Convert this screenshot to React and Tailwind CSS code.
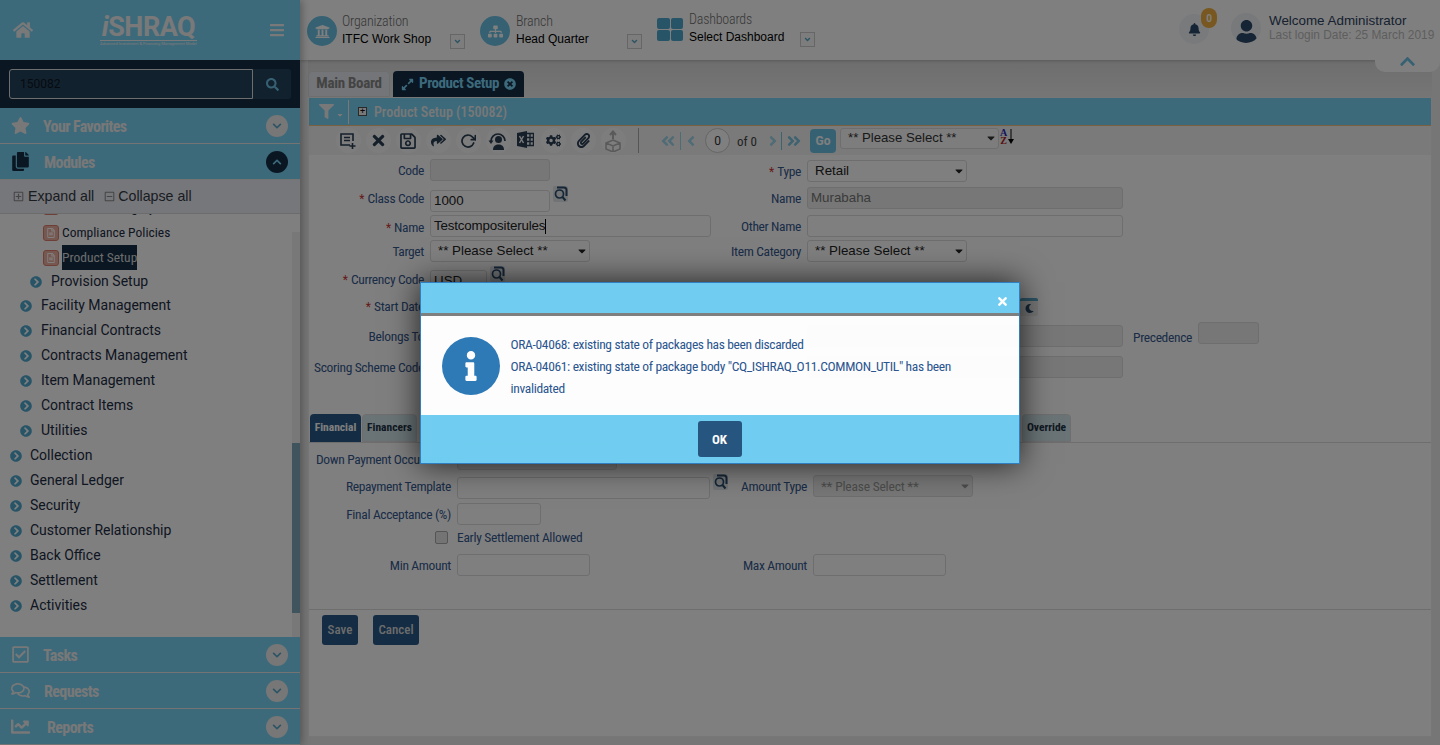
import React from 'react';
import {
  FaHome, FaBars, FaSearch, FaStar, FaChevronDown, FaChevronUp, FaUniversity, FaSitemap, FaBell, FaUser,
  FaFilter, FaCaretDown, FaTimes, FaRegSave, FaReplyAll, FaCogs, FaPaperclip,
  FaRegCheckSquare, FaRegComments, FaChartLine, FaCopy, FaAngleDoubleLeft, FaAngleDoubleRight, FaAngleLeft,
  FaAngleRight, FaExpandAlt, FaTimesCircle, FaChevronCircleRight, FaInfo, FaRegFileAlt, FaMoon,
  FaRegPlusSquare, FaRegMinusSquare, FaAngleDown,
} from 'react-icons/fa';
import { FiRotateCw } from 'react-icons/fi';

const Cn = ({ children, className = '' }) => (
  <span className={`whitespace-nowrap font-['Roboto',sans-serif] [font-stretch:75%] ${className}`}>{children}</span>
);

function SideHead({ icon: Icon, title, open, textPad = 'ml-[13px]' }) {
  return (
    <div className="h-[36px] shrink-0 bg-[#7ad4f6] border-b border-[#e8e8e8] flex items-center pl-[11px] pr-[12px]">
      <Icon size={19} className={open ? 'text-[#142e46]' : 'text-[#f0f0f0]'} />
      <Cn className={`${textPad} mt-[3px] text-[16px] tracking-[-0.6px] font-bold text-[#f0f0f0]`}>{title}</Cn>
      <span className={`ml-auto w-[22px] h-[22px] rounded-full flex items-center justify-center ${open ? 'bg-[#142e46] text-[#7ad4f6]' : 'bg-[#eeeeee] text-[#5aa9c9]'}`}>
        {open ? <FaChevronUp size={10} /> : <FaChevronDown size={10} />}
      </span>
    </div>
  );
}

function TreeRow({ label, pad }) {
  return (
    <div className={`h-[25px] flex items-center gap-[8px] ${pad}`}>
      <FaChevronCircleRight size={12} className="text-[#4fa9cf]" />
      <span className="text-[14px] text-[#1d2c44]">{label}</span>
    </div>
  );
}

function DocIcon() {
  return (
    <span className="w-[16px] h-[16px] rounded-[3px] bg-[#efb0a0] border-[1.5px] border-[#dd7f6c] flex items-center justify-center text-white"><FaRegFileAlt size={10} /></span>
  );
}

function Sidebar() {
  const level1 = ['Facility Management', 'Financial Contracts', 'Contracts Management', 'Item Management', 'Contract Items', 'Utilities'];
  const level0 = ['Collection', 'General Ledger', 'Security', 'Customer Relationship', 'Back Office', 'Settlement', 'Activities'];
  return (
    <aside className="w-[300px] shrink-0 h-full flex flex-col relative z-10 shadow-[2px_0_8px_rgba(0,0,0,0.3)] bg-white">
      <div className="h-[60px] shrink-0 bg-[#7ad4f6] flex items-center pl-[13px] pr-[15px] text-[#f2f2f2]">
        <FaHome size={20} />
        <div className="ml-[67px] flex flex-col items-center leading-none">
          <span className="text-[27px] font-bold tracking-[-0.5px] leading-[26px]"><i>i</i>SHRAQ</span>
          <span className="text-[4px] leading-[5px] border-t border-[#f2f2f2] w-[97px] text-center whitespace-nowrap overflow-hidden">Advanced Investment &amp; Financing Management Model</span>
        </div>
        <FaBars size={16} className="ml-auto" />
      </div>
      <div className="h-[48px] shrink-0 bg-[#142e46] flex items-center pl-[9px] pr-[9px]">
        <div className="h-[30px] flex-1 border border-[#dddddd] rounded-l-[3px] bg-[#24425c] pl-[10px] flex items-center text-[12px] text-[#0c1722]">150082</div>
        <div className="h-[30px] w-[38px] rounded-r-[3px] bg-[#24425c] flex items-center justify-center text-[#6cc3e6]"><FaSearch size={13} /></div>
      </div>
      <SideHead icon={FaStar} title="Your Favorites" />
      <SideHead icon={FaCopy} title="Modules" open textPad="ml-[14px]" />
      <div className="h-[34px] shrink-0 bg-[#eceef6] border-b border-[#d8d8d8] flex items-center pl-[13px] text-[14.2px] text-[#333a44] font-['Liberation_Sans',sans-serif]">
        <FaRegPlusSquare size={11} className="text-[#8a8a8a] mr-[4px]" />Expand all
        <FaRegMinusSquare size={11} className="text-[#8a8a8a] ml-[10px] mr-[3px]" />Collapse all
      </div>
      <div className="flex-1 relative overflow-hidden">
        <div className="-mt-[20px] pr-[8px]">
          <div className="h-[26px] flex items-center pl-[43px] gap-[3px]">
            <DocIcon />
            <Cn className="text-[13.5px] text-[#1d2c44]">Product Category</Cn>
          </div>
          <div className="h-[25px] flex items-center pl-[43px] gap-[3px]">
            <DocIcon />
            <Cn className="text-[13.5px] text-[#1d2c44]">Compliance Policies</Cn>
          </div>
          <div className="h-[25px] flex items-center pl-[43px] gap-[3px]">
            <DocIcon />
            <Cn className="text-[13.5px] text-[#d8d8d8] bg-[#142e46] h-[25px] leading-[25px]">Product Setup</Cn>
          </div>
          <div className="h-[23px] flex items-center gap-[9px] pl-[30px]">
            <FaChevronCircleRight size={12} className="text-[#4fa9cf]" />
            <span className="text-[14px] text-[#1d2c44]">Provision Setup</span>
          </div>
          {level1.map((l) => <TreeRow key={l} label={l} pad="pl-[20px] [&>span]:ml-[1px]" />)}
          {level0.map((l) => <TreeRow key={l} label={l} pad="pl-[10px]" />)}
        </div>
        <div className="absolute right-0 top-[18px] bottom-0 w-[8px] bg-[#f1f1f1]">
          <div className="mt-[211px] h-[170px] bg-[#7fa9bb]" />
        </div>
      </div>
      <SideHead icon={FaRegCheckSquare} title="Tasks" />
      <SideHead icon={FaRegComments} title="Requests" textPad="ml-[14px]" />
      <SideHead icon={FaChartLine} title="Reports" textPad="ml-[17px]" />
    </aside>
  );
}

function MiniSelect() {
  return (
    <span className="w-[15px] h-[15px] border border-[#cccccc] bg-[#fafafa] flex items-center justify-center text-[#5aa9c9]">
      <FaAngleDown size={9} />
    </span>
  );
}

function TopItem({ icon, label, value, boxLeft }) {
  return (
    <div className="flex items-center">
      {icon}
      <div className={boxLeft}>
        <div className="-mt-[2px]"><Cn className="text-[14px] tracking-[-0.2px] font-light text-[#6f6f6f] leading-[18px] block">{label}</Cn></div>
        <div className="text-[12px] leading-[18px] text-black font-['Liberation_Sans',sans-serif] whitespace-nowrap">{value}</div>
      </div>
      <div className="self-end mb-[-1px]"><MiniSelect /></div>
    </div>
  );
}

function TopBar() {
  const circle = 'w-[30px] h-[30px] rounded-full bg-[#6cc3e6] flex items-center justify-center text-white';
  return (
    <header className="h-[60px] shrink-0 bg-white shadow-[0_1px_3px_rgba(0,0,0,0.2)] flex items-start pt-[14px] pl-[7px] pr-[6px] relative">
      <TopItem boxLeft="ml-[5px] w-[108px]" label="Organization" value="ITFC Work Shop" icon={<span className={circle}><FaUniversity size={15} /></span>} />
      <div className="w-[15px]" />
      <TopItem boxLeft="ml-[6px] w-[111px]" label="Branch" value="Head Quarter" icon={<span className={circle}><FaSitemap size={15} /></span>} />
      <div className="w-[15px]" />
      <div className="-mt-[2px]">
        <TopItem boxLeft="ml-[6px] w-[111px]" label="Dashboards" value="Select Dashboard" icon={
          <span className="grid grid-cols-2 gap-[1px] w-[26px]">
            <i className="h-[11px] rounded-[2px] bg-[#4fa9cf]" /><i className="h-[11px] rounded-[2px] bg-[#4fa9cf]" />
            <i className="h-[11px] rounded-[2px] bg-[#4fa9cf]" /><i className="h-[11px] rounded-[2px] bg-[#4fa9cf]" />
          </span>
        } />
      </div>
      <div className="ml-auto flex items-start">
        <div className="relative w-[30px] h-[30px] rounded-full bg-[#f0f4f8] flex items-center justify-center text-[#2c4a6b]">
          <FaBell size={13} />
          <span className="absolute -top-[6px] left-[22px] w-[16px] h-[20px] rounded-[8px] bg-[#f0b040] text-white text-[10px] font-bold flex items-center justify-center">0</span>
        </div>
        <div className="ml-[22px] -mt-[1px] w-[30px] h-[30px] rounded-full bg-[#eef2f6] overflow-hidden flex items-end justify-center text-[#2c4a6b]">
          <FaUser size={23} />
        </div>
        <div className="ml-[8px] w-[165px] -mt-[1px] font-['Liberation_Sans',sans-serif] whitespace-nowrap">
          <div className="text-[13.4px] leading-[15px] text-[#2e4260]">Welcome Administrator</div>
          <div className="text-[11.9px] leading-[14px] text-[#bdbdbd]">Last login Date: 25 March 2019</div>
        </div>
      </div>
      <div className="absolute right-0 top-[60px] w-[65px] h-[12px] rounded-b-[10px] bg-white flex justify-center text-[#6cc3e6] z-10">
        <FaChevronUp size={17} className="-mt-[7px]" />
      </div>
    </header>
  );
}

function ToolBtn({ children, plain }) {
  return (
    <span className={`w-[25px] h-[25px] rounded-full flex items-center justify-center text-[#2a3f55] ${plain ? '' : 'mx-[2.5px] bg-[#fbfbfb]'}`}>{children}</span>
  );
}

function NewDocIcon() {
  return (
    <svg width="18" height="18" viewBox="0 0 18 18" fill="none" stroke="currentColor" strokeWidth="1.6">
      <path d="M11 13H2V2h12v7" />
      <path d="M5 5.5h6M5 8.5h6M13.5 11v6M10.5 14h6" />
    </svg>
  );
}

function SupportIcon() {
  return (
    <svg width="20" height="20" viewBox="0 0 20 20" fill="currentColor">
      <path d="M3 10a7 7 0 1 1 14 0" fill="none" stroke="currentColor" strokeWidth="1.7" />
      <path d="M0.5 9.5h5L3 13z" />
      <circle cx="10.5" cy="8.5" r="3.5" />
      <path d="M5 19c0-4 2.5-5.5 5.5-5.5S16 15 16 19z" />
    </svg>
  );
}

function ExcelIcon() {
  return (
    <svg width="17" height="17" viewBox="0 0 17 17" className="-mt-[3px]">
      <path d="M0 2l10-2v17L0 15z" fill="currentColor" />
      <path d="M2.5 5l4 7M6.5 5l-4 7" stroke="#f4f4f4" strokeWidth="1.5" />
      <path d="M10 2.5h6.5v12H10M10 6.5h6.5M10 10.5h6.5M13 2.5v12" fill="none" stroke="currentColor" strokeWidth="1.4" />
    </svg>
  );
}

function BoxUpIcon() {
  return (
    <svg width="18" height="22" viewBox="0 0 18 22" fill="none" stroke="#b4b4b4" strokeWidth="1.6">
      <path d="M9 10l7 3v6l-7 3-7-3v-6zM2 13l7 3 7-3M9 16v6" />
      <path d="M9 9V2M6 5l3-3.5L12 5" strokeWidth="2" />
    </svg>
  );
}

function SortAz() {
  return (
    <span className="flex -mt-[7px] ml-px items-start">
      <span className="flex flex-col items-center font-['Liberation_Serif',serif] font-bold text-[10px] leading-[8px]">
        <span className="text-[#2a2ab8]">A</span>
        <span className="text-[#b02020]">Z</span>
      </span>
      <svg width="6" height="16" viewBox="0 0 6 16" className="ml-[1px]">
        <path d="M3 0v12" stroke="#000" strokeWidth="1" />
        <path d="M0 10h6l-3 5z" fill="#000" />
      </svg>
    </span>
  );
}

function Toolbar() {
  return (
    <div className="h-[29px] bg-[#f4f4f4] flex items-center pl-[24px] shrink-0 text-[#2a3f55]">
      <ToolBtn><NewDocIcon /></ToolBtn>
      <ToolBtn><FaTimes size={17} /></ToolBtn>
      <ToolBtn><FaRegSave size={18} /></ToolBtn>
      <ToolBtn><FaReplyAll size={15} className="-scale-x-100" /></ToolBtn>
      <ToolBtn><FiRotateCw size={16} strokeWidth={2.6} /></ToolBtn>
      <ToolBtn><SupportIcon /></ToolBtn>
      <ToolBtn plain><ExcelIcon /></ToolBtn>
      <ToolBtn><FaCogs size={15} /></ToolBtn>
      <ToolBtn><FaPaperclip size={15} /></ToolBtn>
      <ToolBtn><BoxUpIcon /></ToolBtn>
      <span className="ml-[10px] w-px h-[25px] bg-[#aaaaaa]" />
      <div className="ml-[21px] flex items-center text-[#9fd6ec]">
        <FaAngleDoubleLeft size={16} />
        <span className="ml-[4px] w-px h-[18px] bg-[#9fd6ec]" />
        <FaAngleLeft size={16} className="ml-[2px]" />
        <span className="ml-[6px] w-[25px] h-[25px] rounded-full border border-[#cccccc] bg-white text-[#333] text-[12px] flex items-center justify-center">0</span>
        <span className="ml-[7px] w-[20px]"><Cn className="text-[13px] text-[#444]">of 0</Cn></span>
        <FaAngleRight size={16} className="ml-[8px]" />
        <span className="w-px h-[18px] bg-[#7fc5e2]" />
        <FaAngleDoubleRight size={16} className="ml-[4px] text-[#7fc5e2]" />
      </div>
      <span className="ml-[8px] w-[26px] h-[24px] rounded-[4px] bg-[#6cc3e6] text-white text-[12px] font-bold flex items-center justify-center">Go</span>
      <span className="ml-[4px] w-[159px] h-[21px] -mt-[5px] rounded-[3px] border border-[#dddddd] bg-[#fafafa] pl-[7px] pr-[1px] flex items-center justify-between text-[13.2px] text-[#333] font-['Liberation_Sans',sans-serif]">
        ** Please Select **<FaCaretDown size={12} />
      </span>
      <SortAz />
    </div>
  );
}

function Lookup({ className = '' }) {
  return (
    <span className={`w-[15px] h-[16px] rounded-[2px] bg-[#e2e6ea] text-[#2a4d6e] ${className}`}>
      <svg width="15" height="16" viewBox="0 0 15 16" fill="none" stroke="currentColor">
        <path d="M4 1.5h7a2.5 2.5 0 0 1 2.5 2.5v6" strokeWidth="2" />
        <circle cx="6.5" cy="8" r="4" strokeWidth="1.7" />
        <path d="M9.5 11l3 3.5" strokeWidth="2" />
      </svg>
    </span>
  );
}

const inputCls = "h-[22px] rounded-[3px] border border-[#dddddd] text-[13.33px] px-[3px] flex items-center text-[#222] bg-white font-['Liberation_Sans',sans-serif]";
const disabledCls = '!bg-[#eceeec]';

function Label({ children, required, width = 'w-[114px]', pt = 'pt-[3px]' }) {
  return (
    <label className={`${width} shrink-0 mr-[6px] text-right leading-[16px] whitespace-nowrap ${pt}`}>
      {required && <span className="text-[#c33] text-[12px] mr-[3px]">*</span>}
      <Cn className="text-[13.5px] tracking-[-0.35px] text-[#36598f]">{children}</Cn>
    </label>
  );
}

function PleaseSelect({ w = 'w-[160px]' }) {
  return (
    <span className={`${inputCls} ${w} justify-between !pl-[7px] !pr-[1px]`}>
      ** Please Select **<FaCaretDown size={12} />
    </span>
  );
}

function TopForm() {
  return (
    <div className="h-[259px] flex shrink-0">
      <div className="w-[422px] pl-[1px] shrink-0">
        <div className="flex mt-[4px]"><Label>Code</Label><span className={`${inputCls} ${disabledCls} w-[120px]`} /></div>
        <div className="flex mt-[9px]">
          <Label required pt="pt-0">Class Code</Label><span className={`${inputCls} w-[120px]`}>1000</span><Lookup className="ml-[3px] -mt-[4px]" />
        </div>
        <div className="flex mt-[3px]"><Label required pt="pt-[4px]">Name</Label><span className={`${inputCls} w-[281px] tracking-[-0.15px]`}>Testcompositerules<i className="w-px h-[15px] bg-black" /></span></div>
        <div className="flex mt-[3px]"><Label>Target</Label><PleaseSelect /></div>
        <div className="flex mt-[8px]"><Label required pt="pt-px">Currency Code</Label><span className={`${inputCls} w-[57px]`}>USD</span><Lookup className="ml-[3px] -mt-[4px]" /></div>
        <div className="flex mt-[3px]"><Label required>Start Date</Label></div>
        <div className="flex mt-[10px]"><Label>Belongs To</Label></div>
        <div className="flex mt-[12px]"><Label>Scoring Scheme Code</Label></div>
      </div>
      <div className="flex-1">
        <div className="flex mt-[5px]"><Label width="w-[70px]" required>Type</Label><span className={`${inputCls} w-[160px] justify-between !pl-[7px] !pr-[1px]`}>Retail<FaCaretDown size={12} /></span></div>
        <div className="flex mt-[5px]"><Label width="w-[70px]">Name</Label><span className={`${inputCls} ${disabledCls} w-[316px] !text-[#777]`}>Murabaha</span></div>
        <div className="flex mt-[6px]"><Label width="w-[70px]">Other Name</Label><span className={`${inputCls} w-[316px]`} /></div>
        <div className="flex mt-[3px]"><Label width="w-[70px]">Item Category</Label><PleaseSelect /></div>
        <div className="h-[18px] mt-[36px] pl-[289px] flex">
          <span className="w-[18px] h-[18px] rounded-[2px] border-t-[3px] border-[#5aa9c9] bg-[#eceeec] flex items-center justify-center text-[#2a4d6e]"><FaMoon size={9} /></span>
        </div>
        <div className="flex mt-[6px] items-start">
          <span className="ml-[76px] w-[316px] h-[22px] mt-[3px] rounded-[3px] border border-[#dddddd] bg-[#eceeec]" />
          <span className="ml-[10px] mt-[7px] mr-[6px] leading-[16px]"><Cn className="text-[13.5px] tracking-[-0.35px] text-[#36598f]">Precedence</Cn></span>
          <span className={`${inputCls} ${disabledCls} w-[61px]`} />
        </div>
        <span className={`${inputCls} ${disabledCls} w-[316px] ml-[76px] mt-[9px]`} />
      </div>
    </div>
  );
}

function Tabs() {
  return (
    <div className="h-[29px] flex items-end pl-px border-b border-[#dddddd] shrink-0">
      <span className="w-[51px] h-[28px] rounded-t-[4px] bg-[#285a88] text-white flex items-center justify-center"><Cn className="text-[11.5px] font-bold">Financial</Cn></span>
      <span className="ml-px w-[55px] h-[28px] rounded-t-[4px] bg-[#d4e8ee] border border-[#dddddd] flex items-center justify-center"><Cn className="text-[11.5px] font-bold text-[#234]">Financers</Cn></span>
      <span className="ml-[605px] w-[49px] h-[28px] rounded-t-[4px] bg-[#d4e8ee] border border-[#dddddd] flex items-center justify-center"><Cn className="text-[11.5px] font-bold text-[#234]">Override</Cn></span>
    </div>
  );
}

function LowerForm() {
  const L = (p) => <Label width="w-[141px]" {...p} />;
  return (
    <div className="pl-px h-[166px] shrink-0">
      <div className="flex mt-[2px]"><L pt="pt-[6px]">Down Payment Occurrence</L><span className={`${inputCls} ${disabledCls} w-[160px] h-[25px]`} /></div>
      <div className="flex items-start mt-[7px]">
        <L pt="pt-px">Repayment Template</L>
        <span className={`${inputCls} w-[253px]`} /><Lookup className="ml-[3px] -mt-[3px]" />
        <Label width="w-[73px] ml-[6px]" pt="pt-px">Amount Type</Label>
        <span className="-mt-[2px]">
          <span className={`${inputCls} ${disabledCls} w-[160px] justify-between !pl-[7px] !pr-[1px] !text-[#999]`}>
            <Cn className="text-[13.5px] tracking-[-0.2px]">** Please Select **</Cn><FaCaretDown size={12} />
          </span>
        </span>
      </div>
      <div className="flex mt-[4px]"><L>Final Acceptance (%)</L><span className={`${inputCls} w-[84px]`} /></div>
      <div className="flex items-center mt-[4px] pl-[125px] h-[16px]">
        <span className="w-[13px] h-[13px] rounded-[2px] border border-[#aaaaaa] bg-[#e8e8e8]" />
        <span className="ml-[9px]"><Cn className="text-[13.5px] tracking-[-0.3px] text-[#36598f]">Early Settlement Allowed</Cn></span>
      </div>
      <div className="flex mt-[9px]">
        <L>Min Amount</L><span className={`${inputCls} w-[133px]`} />
        <Label width="w-[217px]">Max Amount</Label><span className={`${inputCls} w-[133px]`} />
      </div>
    </div>
  );
}

function Panel() {
  return (
    <section className="flex-1 mx-[8px] mb-[8px] flex flex-col min-h-0">
      <div className="h-[37px] shrink-0 pt-[10px] flex items-end bg-gradient-to-b from-[#dcdcdc] to-[#ececec]">
        <span className="w-[82px] h-[26px] rounded-t-[4px] bg-[#e6eaf0] border border-[#dddddd] flex items-center justify-center pb-[2px]"><Cn className="text-[15px] tracking-[-0.3px] font-bold text-[#888888]">Main Board</Cn></span>
        <span className="ml-[3px] w-[131px] h-[26px] rounded-t-[4px] bg-[#142e46] flex items-center justify-center gap-[5px] text-[#7ad4f6]">
          <FaExpandAlt size={13} /><Cn className="text-[15px] tracking-[-0.4px] font-bold -mt-[2px]">Product Setup</Cn><FaTimesCircle size={12} />
        </span>
      </div>
      <div className="flex-1 bg-white border border-[#eeeeee] flex flex-col min-h-0">
        <div className="h-[28px] shrink-0 bg-[#7ad4f6] border-b border-[#f0c080] flex items-center text-[#f0f0f0]">
          <span className="w-[40px] flex items-center pl-[10px] gap-[2px] border-r border-[#f0f0f0] h-[24px]"><FaFilter size={15} /><FaCaretDown size={8} className="mt-[7px]" /></span>
          <span className="ml-[9px] w-[9px] h-[9px] border border-[#555] bg-[#f2f2f2] text-[#111] text-[9px] leading-[7px] flex items-center justify-center">+</span>
          <Cn className="ml-[7px] mt-px text-[14px] font-medium">Product Setup (150082)</Cn>
        </div>
        <Toolbar />
        <TopForm />
        <Tabs />
        <LowerForm />
        <div className="border-t border-[#dddddd] pl-[13px] pt-[5px] flex gap-[15px]">
          <span className="w-[36px] h-[30px] rounded-[3px] bg-[#285a88] text-[#d8d8d8] flex items-center justify-center"><Cn className="text-[13px] font-medium">Save</Cn></span>
          <span className="w-[46px] h-[30px] rounded-[3px] bg-[#285a88] text-[#d8d8d8] flex items-center justify-center"><Cn className="text-[13px] font-medium">Cancel</Cn></span>
        </div>
      </div>
    </section>
  );
}

function Modal() {
  return (
    <div className="absolute inset-0 z-30 bg-black/50 flex items-start justify-center pt-[282px]">
      <div className="w-[600px] h-[182px] ml-[-1px] flex flex-col border border-[#2f80c2] bg-white opacity-[0.985] shadow-[0_0_30px_rgba(0,0,0,0.75)]">
        <div className="h-[30px] bg-[#70cff3] flex items-center justify-end pr-[10px] text-white"><FaTimes size={13} className="mt-[6px]" /></div>
        <div className="h-[3px] bg-[#808080]" />
        <div className="h-[99px] flex pl-[21px] items-center">
          <span className="w-[58px] h-[58px] rounded-full bg-[#2c7ab8] flex items-center justify-center text-white"><FaInfo size={30} /></span>
          <div className="ml-[11px] w-[446px] text-[13.5px] tracking-[-0.35px] leading-[22px] text-[#2a5590]">
            <div><Cn>ORA-04068: existing state of packages has been discarded</Cn></div>
            <div><Cn className="!whitespace-normal">ORA-04061: existing state of package body "CQ_ISHRAQ_O11.COMMON_UTIL" has been invalidated</Cn></div>
          </div>
        </div>
        <div className="flex-1 bg-[#70cff3] flex items-center justify-center">
          <span className="w-[44px] h-[36px] rounded-[3px] bg-[#25557f] text-white flex items-center justify-center pt-px"><Cn className="text-[13px] font-bold">OK</Cn></span>
        </div>
      </div>
    </div>
  );
}

export default function App() {
  return (
    <div className="relative w-[1440px] h-[745px] overflow-hidden flex bg-[#ececec] font-['Roboto',sans-serif]">
      <Sidebar />
      <main className="flex-1 flex flex-col min-w-0">
        <TopBar />
        <Panel />
      </main>
      <Modal />
    </div>
  );
}
